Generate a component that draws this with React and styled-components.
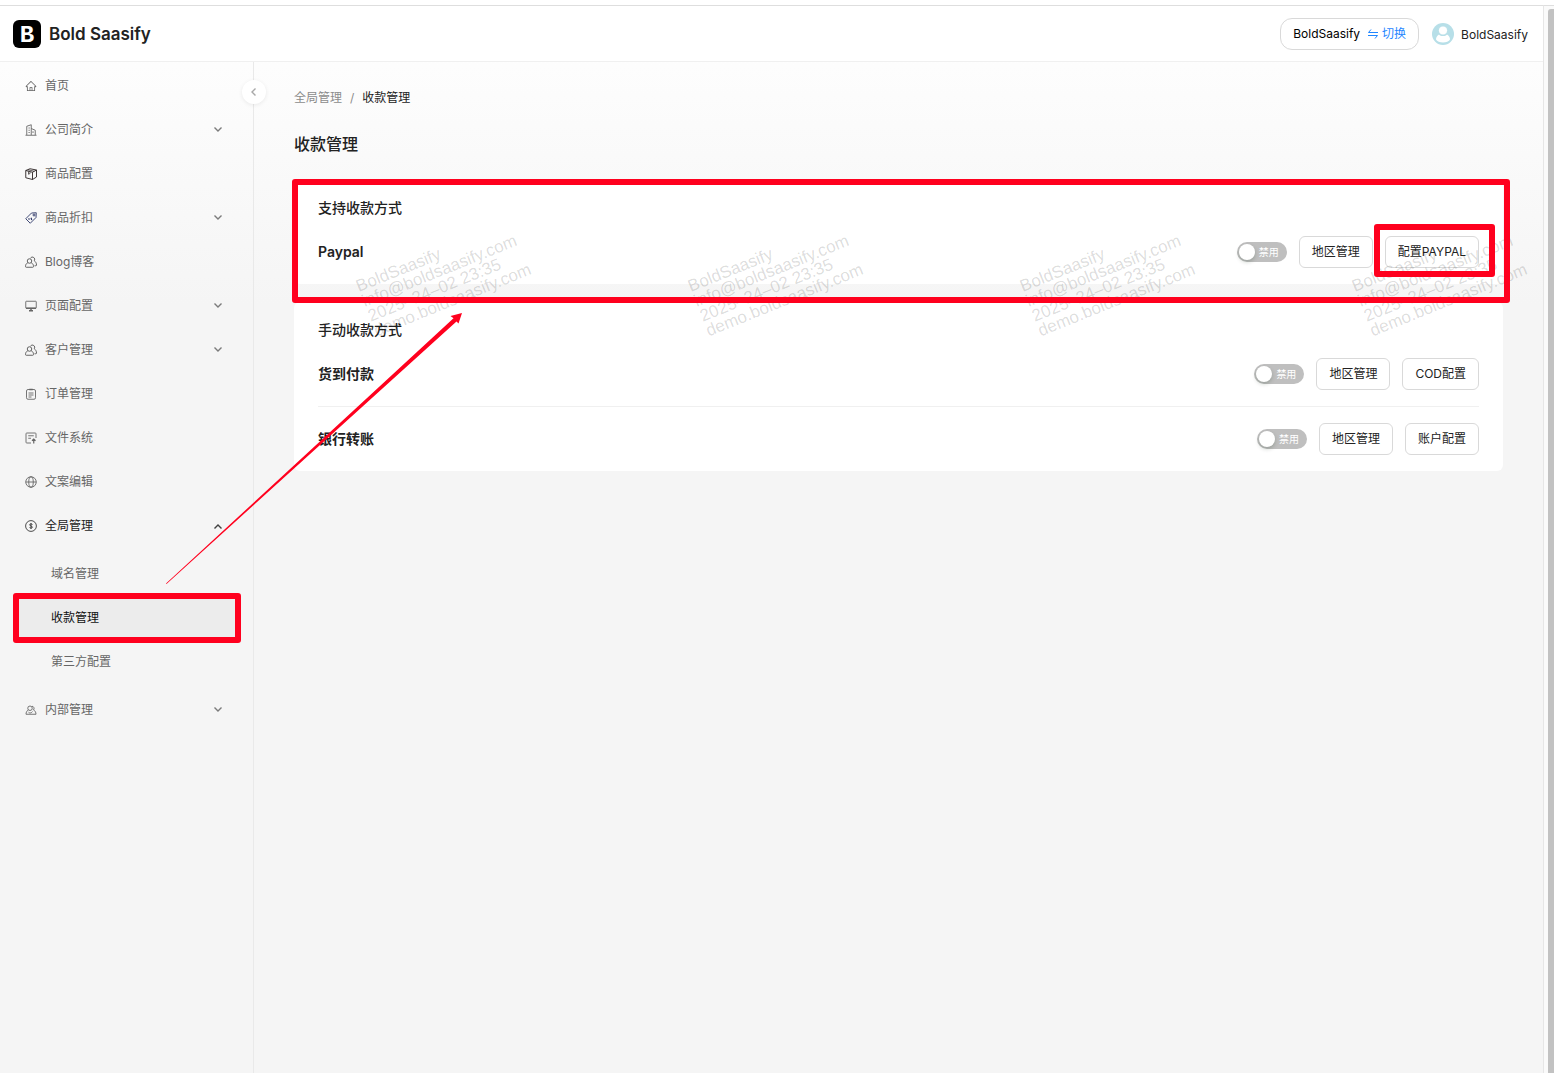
import { useState } from "react";
import styled, { createGlobalStyle } from "styled-components";
import { AiOutlineHome } from "react-icons/ai";

const menu = [
  { name: "首页", icon: "home" },
  { name: "公司简介", icon: "company", children: [] },
  { name: "商品配置", icon: "box" },
  { name: "商品折扣", icon: "tag", children: [] },
  { name: "Blog博客", icon: "users" },
  { name: "页面配置", icon: "monitor", children: [] },
  { name: "客户管理", icon: "users", children: [] },
  { name: "订单管理", icon: "order" },
  { name: "文件系统", icon: "file" },
  { name: "文案编辑", icon: "globe" },
  {
    name: "全局管理",
    icon: "dollar",
    open: true,
    children: ["域名管理", "收款管理", "第三方配置"],
  },
  { name: "内部管理", icon: "staff", children: [] },
];

const watermark = [
  "BoldSaasify",
  "info@boldsaasify.com",
  "2025–24–02 23:35",
  "demo.boldsaasify.com",
];

const App = () => {
  return (
    <>
      <GlobalStyle />
      <Window>
        <Page>
          <HeaderBar />
          <Body>
            <SideMenu />
            <Main>
              <Breadcrumb aria-label="breadcrumb">
                <a href="#global">全局管理</a>
                <span>/</span>
                <strong>收款管理</strong>
              </Breadcrumb>
              <PageTitle>收款管理</PageTitle>
              <Cards>
                <Card>
                  <CardTitle>支持收款方式</CardTitle>
                  <PaymentRow name="Paypal" action="配置PAYPAL" marked />
                  <CardMark />
                </Card>
                <Card>
                  <CardTitle>手动收款方式</CardTitle>
                  <PaymentRow name="货到付款" action="COD配置" />
                  <PaymentRow name="银行转账" action="账户配置" />
                </Card>
              </Cards>
              <Watermark aria-hidden="true">
                {[0, 1, 2, 3].map((i) => (
                  <WatermarkCell key={i}>
                    <WatermarkText>
                      {watermark.map((line) => (
                        <div key={line}>{line}</div>
                      ))}
                    </WatermarkText>
                  </WatermarkCell>
                ))}
              </Watermark>
            </Main>
          </Body>
          <Arrow viewBox="0 0 300 272" aria-hidden="true">
            <path d="M0 270.500 L287.500 5.200 L284.500 3 L296 0 L292.500 10.500 L290.500 8.500 L0.500 271 Z" />
          </Arrow>
        </Page>
        <ScrollTrack>
          <ScrollThumb />
        </ScrollTrack>
      </Window>
    </>
  );
};

const HeaderBar = () => (
  <Header>
    <Brand href="#home">
      <Logo>B</Logo>
      Bold Saasify
    </Brand>
    <HeaderRight>
      <TeamButton type="button">
        BoldSaasify
        <SwitchText>
          <svg width="12" height="12" viewBox="0 0 12 12">
            <path d="M4 1.500L1.500 4.500H11M1 7.500H10.500L8 10.500" />
          </svg>
          切换
        </SwitchText>
      </TeamButton>
      <UserLink href="#account">
        <svg width="22" height="22" viewBox="0 0 22 22">
          <circle cx="11" cy="11" r="11" fill="#b7dfe8" />
          <path
            d="M7 11.500C8.500 13.500 13.500 13.500 15 11.500C17 12.500 18 14.500 18 16.500C16 20.500 6 20.500 4 16.500C4 14.500 5 12.500 7 11.500Z"
            fill="#fff"
          />
          <circle
            cx="11"
            cy="7.500"
            r="4.600"
            fill="#fff"
            stroke="#b7dfe8"
            strokeWidth="1"
          />
        </svg>
        <UserName>BoldSaasify</UserName>
      </UserLink>
    </HeaderRight>
  </Header>
);

const SideMenu = () => (
  <Sider>
    <Collapse type="button" aria-label="collapse menu">
      <Chevron dir="left" />
    </Collapse>
    <nav>
      {menu.map((item) => (
        <MenuGroup key={item.name} item={item} />
      ))}
    </nav>
  </Sider>
);

const MenuGroup = ({ item }) => {
  const [open, setOpen] = useState(Boolean(item.open));

  if (!item.children) {
    return (
      <MenuLink href={"#" + item.icon}>
        <MenuIcon name={item.icon} />
        {item.name}
      </MenuLink>
    );
  }

  return (
    <>
      <MenuToggle
        type="button"
        $open={open}
        aria-expanded={open}
        onClick={() => setOpen(!open)}
      >
        <MenuIcon name={item.icon} />
        <MenuLabel>{item.name}</MenuLabel>
        <Chevron dir={open ? "up" : "down"} />
      </MenuToggle>
      {open && item.children.length > 0 && (
        <SubMenu>
          {item.children.map((name) => (
            <SubLink key={name} href="#global" $active={name === "收款管理"}>
              {name}
              {name === "收款管理" && <MenuMark />}
            </SubLink>
          ))}
        </SubMenu>
      )}
    </>
  );
};

const PaymentRow = ({ name, action, marked }) => {
  const [enabled, setEnabled] = useState(false);

  return (
    <Row>
      <RowName>{name}</RowName>
      <Switch $on={enabled}>
        <input
          type="checkbox"
          role="switch"
          aria-label={name}
          checked={enabled}
          onChange={() => setEnabled(!enabled)}
        />
        <Knob />
        <span>{enabled ? "启用" : "禁用"}</span>
      </Switch>
      <Button type="button">地区管理</Button>
      <Button type="button">
        {action}
        {marked && <ButtonMark />}
      </Button>
    </Row>
  );
};

const chevrons = {
  down: "M1.500 2.500L5 6L8.500 2.500",
  up: "M1.500 7.500L5 4L8.500 7.500",
  left: "M6.500 1.500L3 5L6.500 8.500",
};

const Chevron = ({ dir }) => (
  <ChevronSvg viewBox="0 0 10 10">
    <path d={chevrons[dir]} />
  </ChevronSvg>
);

const MenuIcon = ({ name }) => {
  if (name === "home") return <AiOutlineHome size={12} />;
  return (
    <IconSvg viewBox="0 0 24 24" $color={iconColors[name]}>
      {iconShapes[name]}
    </IconSvg>
  );
};

const iconColors = { box: "#2a2222", tag: "#2b3566", users: "#555" };

const iconShapes = {
  company: (
    <path d="M1 22.500H23M3.500 22V4.500L12.500 1.500V22M12.500 9L20.500 12.500V22M7 8H9.500M7 12.500H9.500M7 17H9.500M16 14.500V18" />
  ),
  box: (
    <>
      <path d="M1.500 5L10 1.500L23 4V18L15 23L1.500 19.500ZM1.500 5L15 8.500V23M15 8.500L23 4" />
      <path d="M6 3.500L18.500 6.500M7 7V12.500L10 11V8" strokeWidth="1.400" />
    </>
  ),
  tag: (
    <>
      <path d="M13 2L22.500 1.500L22 11L10.500 22.500L1.500 13.500Z" />
      <circle cx="18" cy="6" r="2" />
      <path d="M7 13L9 15M12 11.500L13.500 16" strokeWidth="2.400" />
    </>
  ),
  users: (
    <>
      <circle cx="9" cy="10" r="4.500" />
      <path d="M5.500 13.500C2.500 15 1 17.500 1 21C1 22 1.500 22.500 2.500 22.500H15.500C16.500 22.500 17 22 17 21C17 17.500 15.500 15 12.500 13.500" />
      <path d="M11 4A4.500 4.500 0 1 1 18.500 9.500C21.500 11.500 23 14.500 23 18C23 19 22.500 19.500 21.500 19.500H19" />
    </>
  ),
  monitor: (
    <>
      <rect x="1.500" y="2.500" width="21" height="14" rx="1" />
      <path d="M2 16.500H22M12 17V21M8 21.500H16" strokeWidth="3" />
    </>
  ),
  order: (
    <>
      <rect x="3" y="3" width="18" height="19.500" rx="3" />
      <path d="M8.500 3H15.500" strokeWidth="3" />
      <path d="M7 10H17M7 14H17M7 18H13" />
    </>
  ),
  file: (
    <>
      <path d="M12 22H3.500C2.500 22 2 21.500 2 20.500V3.500C2 2.500 2.500 2 3.500 2H20.500C21.500 2 22 2.500 22 3.500V12" />
      <path d="M6.500 7.500H17.500M6.500 12.500H12" />
      <path d="M17.500 23V15M14 17.500L17.500 14L21 17.500" strokeWidth="2.400" />
    </>
  ),
  globe: (
    <>
      <circle cx="12" cy="12" r="10.500" />
      <ellipse cx="12" cy="12" rx="4.500" ry="10.500" />
      <path d="M1.500 12H22.500" />
    </>
  ),
  dollar: (
    <>
      <circle cx="12" cy="12" r="10.800" strokeWidth="1.600" />
      <path
        d="M15 9.500C15 7.300 9 7.300 9 9.500C9 12.300 15 11.700 15 14.500C15 16.700 9 16.700 9 14.500M12 6V18"
        strokeWidth="1.500"
      />
    </>
  ),
  staff: (
    <>
      <circle cx="10" cy="8.500" r="4.500" />
      <path d="M6.500 12C3.500 13.500 2 17 2 20.500H22C22 17 20.500 13.500 17 12A4.500 4.500 0 0 0 14 4.500" />
      <path d="M7 16.500C9 18.500 13 18.500 15 15" />
    </>
  ),
};

const GlobalStyle = createGlobalStyle`
  * {
    box-sizing: border-box;
  }
  body {
    margin: 0;
    background: #fff;
    color: #222;
    font: 12px/20px Inter, "Noto Sans CJK SC", sans-serif;
  }
  button {
    font: inherit;
    color: inherit;
    cursor: pointer;
  }
  a {
    color: inherit;
    text-decoration: none;
  }
`;

const Window = styled.div`
  display: flex;
  min-height: 100vh;
  padding-top: 5px;
`;

const Page = styled.div`
  position: relative;
  flex: 1;
  display: flex;
  flex-direction: column;
  border-top: 1px solid #dedede;
  background: linear-gradient(#fff, #f5f5f5 28%);
`;

const ScrollTrack = styled.div`
  width: 11px;
  padding: 3px 0 0 4px;
  border-top: 1px solid #dedede;
  border-left: 1px solid #e6e6e6;
  background: #fafafa;
  display: flex;
`;

const ScrollThumb = styled.div`
  flex: 1;
  border-radius: 3px 0 0 0;
  background: #c2c2c2;
`;

const Header = styled.header`
  display: flex;
  align-items: center;
  justify-content: space-between;
  height: 56px;
  padding: 0 15px 0 13px;
  border-bottom: 1px solid #f0f0f0;
  background: #fff;
`;

const Brand = styled.a`
  display: flex;
  align-items: center;
  gap: 8px;
  font-size: 17px;
  font-weight: 600;
`;

const Logo = styled.span`
  width: 28px;
  height: 28px;
  border-radius: 6px;
  background: #000;
  color: #fff;
  font: 700 24px/32px "Liberation Mono", monospace;
  text-align: center;
`;

const HeaderRight = styled.div`
  display: flex;
  align-items: center;
  gap: 13px;
`;

const TeamButton = styled.button`
  display: flex;
  align-items: center;
  gap: 7px;
  height: 32px;
  padding: 0 12px;
  border: 1px solid #d9d9d9;
  border-radius: 12px;
  background: #fff;
  color: #000;
`;

const SwitchText = styled.span`
  display: flex;
  align-items: center;
  gap: 3px;
  color: #1f86ff;

  path {
    fill: none;
    stroke: currentColor;
  }
`;

const UserLink = styled.a`
  display: flex;
  align-items: center;
  gap: 7px;
`;

const UserName = styled.span`
  padding-top: 2px;
`;

const Body = styled.div`
  flex: 1;
  display: flex;
`;

const Sider = styled.aside`
  position: relative;
  flex: none;
  width: 254px;
  padding: 4px 16px;
  border-right: 1px solid #e9e9e9;
`;

const Collapse = styled.button`
  position: absolute;
  top: 18px;
  right: -13px;
  z-index: 1;
  display: grid;
  place-items: center;
  width: 24px;
  height: 24px;
  padding: 0;
  border: 0;
  border-radius: 50%;
  background: #fff;
  color: #999;
  box-shadow: 0 1px 4px rgba(0, 0, 0, 0.08);
`;

const MenuLink = styled.a`
  display: flex;
  align-items: center;
  gap: 8px;
  height: 40px;
  margin-bottom: 4px;
  padding: 0 14px 0 9px;
  color: #666;
`;

const MenuToggle = styled.button`
  display: flex;
  align-items: center;
  gap: 8px;
  width: 100%;
  height: 40px;
  margin-bottom: 4px;
  padding: 0 14px 0 9px;
  border: 0;
  background: none;
  color: ${({ $open }) => ($open ? "#222" : "#666")};
`;

const MenuLabel = styled.span`
  flex: 1;
  text-align: left;
`;

const SubMenu = styled.div`
  padding: 4px 0;
`;

const SubLink = styled.a`
  position: relative;
  display: flex;
  align-items: center;
  height: 40px;
  margin-bottom: 4px;
  padding-left: 35px;
  border-radius: 4px;
  background: ${({ $active }) => ($active ? "#ececec" : "none")};
  color: ${({ $active }) => ($active ? "#111" : "#666")};
`;

const ChevronSvg = styled.svg`
  width: 10px;
  height: 10px;
  fill: none;
  stroke: currentColor;
  stroke-width: 1.4;
  opacity: 0.85;
`;

const IconSvg = styled.svg`
  width: 12px;
  height: 12px;
  fill: none;
  stroke: ${({ $color }) => $color || "currentColor"};
  stroke-width: 1.8;
`;

const Main = styled.main`
  position: relative;
  flex: 1;
  padding: 26px 40px;
`;

const Breadcrumb = styled.nav`
  display: flex;
  gap: 8px;
  color: #8c8c8c;

  strong {
    color: #222;
    font-weight: 400;
  }
`;

const PageTitle = styled.h1`
  margin: 24px 0;
  font-size: 16px;
  line-height: 24px;
  font-weight: 500;
`;

const Cards = styled.div`
  display: grid;
  gap: 18px;
`;

const Card = styled.section`
  position: relative;
  padding: 16px 24px 0;
  border-radius: 6px;
  background: #fff;
`;

const CardTitle = styled.h2`
  margin: 0;
  font-size: 14px;
  line-height: 24px;
  font-weight: 500;
`;

const Row = styled.div`
  display: flex;
  align-items: center;
  gap: 12px;
  padding: 16px 0;

  & + & {
    border-top: 1px solid #f0f0f0;
  }
`;

const RowName = styled.h3`
  flex: 1;
  margin: 0;
  font-size: 14px;
  font-weight: 600;
`;

const Button = styled.button`
  position: relative;
  height: 32px;
  padding: 0 12px;
  border: 1px solid #d9d9d9;
  border-radius: 6px;
  background: #fff;
`;

const Switch = styled.label`
  position: relative;
  display: flex;
  flex-direction: ${({ $on }) => ($on ? "row-reverse" : "row")};
  align-items: center;
  justify-content: space-between;
  width: 50px;
  height: 20px;
  padding: 0 8px 0 2px;
  border-radius: 10px;
  background: ${({ $on }) => ($on ? "#222" : "#bfbfbf")};
  color: #fff;
  font-size: 10px;
  cursor: pointer;

  input {
    position: absolute;
    inset: 0;
    margin: 0;
    opacity: 0;
  }
`;

const Knob = styled.i`
  width: 16px;
  height: 16px;
  border-radius: 50%;
  background: #fff;
  box-shadow: 0 2px 4px rgba(0, 35, 11, 0.2);
`;

const Watermark = styled.div`
  position: absolute;
  inset: 0;
  display: flex;
  overflow: hidden;
  padding: 218px 0 0 100px;
  pointer-events: none;
`;

const WatermarkCell = styled.div`
  flex: none;
  width: 332px;
`;

const WatermarkText = styled.div`
  width: max-content;
  color: rgba(0, 0, 0, 0.15);
  font-family: "Liberation Sans", Arial, sans-serif;
  font-size: 17px;
  line-height: 16px;
  transform: rotate(-22deg);
  transform-origin: 0 0;
`;

// red annotation frames drawn over the page
const Mark = styled.span`
  position: absolute;
  z-index: 2;
  border: 6px solid #ff001e;
  border-radius: 3px;
  pointer-events: none;
`;

const CardMark = styled(Mark)`
  inset: -1px -7px -19px -2px;
`;

const ButtonMark = styled(Mark)`
  inset: -13px -17px -10px -12px;
`;

const MenuMark = styled(Mark)`
  inset: -5px -4px -5px -3px;
`;

const Arrow = styled.svg`
  position: absolute;
  top: 307px;
  left: 166px;
  z-index: 2;
  width: 300px;
  height: 272px;
  fill: #ff001e;
  pointer-events: none;
`;

export default App;
